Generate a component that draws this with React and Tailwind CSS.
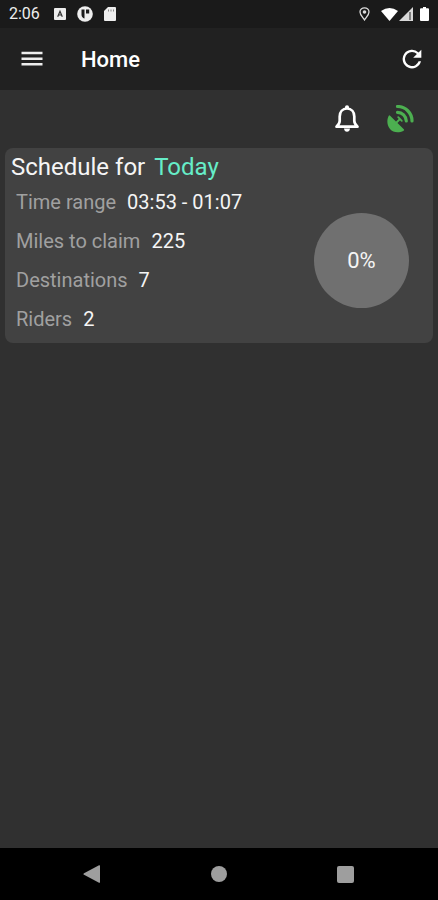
import React from 'react';

const details = [
  { label: 'Time range', value: '03:53 - 01:07' },
  { label: 'Miles to claim', value: '225' },
  { label: 'Destinations', value: '7' },
  { label: 'Riders', value: '2' },
];

function StatusBar() {
  return (
    <div className="flex h-7 items-center justify-between bg-[#1a1a1a] px-[9px] text-[#eeeeee]">
      <div className="flex items-center">
        <span className="w-[45px] text-base leading-5">2:06</span>
        <svg className="h-[12px] w-[12px]" viewBox="0 0 12 12" aria-hidden="true">
          <rect width="12" height="12" rx="1" fill="#eeeeee" />
          <path d="M3.700 8.700L6 3.200L8.300 8.700M4.500 7h3" stroke="#333333" strokeWidth="1.200" fill="none" />
        </svg>
        <svg className="ml-[11px] h-4 w-4" viewBox="0 0 16 16" aria-hidden="true">
          <circle cx="8" cy="8" r="7.800" fill="#eeeeee" />
          <path d="M4.500 3.500h3v9q-3-1-3-4zM9 3.500h3.200v4H9z" fill="#1a1a1a" />
        </svg>
        <svg className="ml-[11px] h-[14px] w-3" viewBox="0 0 12 14" aria-hidden="true">
          <path d="M4 0h7q1 0 1 1v12q0 1-1 1H1q-1 0-1-1V4z" fill="#eeeeee" />
          <path d="M4.500 2.500v2M7 2.500v2M9.500 2.500v2" stroke="#888888" />
        </svg>
      </div>
      <div className="flex items-center">
        <svg className="mr-[11px] h-[14px] w-[11px]" viewBox="0 0 11 14" aria-hidden="true">
          <path d="M5.500 13C3.500 10 1 7.800 1 5a4.500 4.200 0 0 1 9 0C10 7.800 7.500 10 5.500 13z" fill="none" stroke="#dddddd" strokeWidth="1.300" />
          <circle cx="5.500" cy="5" r="1.800" fill="#dddddd" />
        </svg>
        <svg className="h-[13px] w-[17px]" viewBox="0 0 17 13" aria-hidden="true">
          <path d="M0 3Q8.500-3 17 3L8.500 13z" fill="#ffffff" />
        </svg>
        <svg className="ml-px h-[14px] w-[14px]" viewBox="0 0 14 14" aria-hidden="true">
          <path d="M14 0v14H0z" fill="#d8d8d8" />
          <path d="M11 5v8" stroke="#444444" strokeWidth="1.200" />
        </svg>
        <svg className="ml-[7px] h-[14px] w-[9px]" viewBox="0 0 9 14" aria-hidden="true">
          <path d="M3 0h3v1.300h2q1 0 1 1V13q0 1-1 1H1q-1 0-1-1V2.300q0-1 1-1h2z" fill="#ffffff" />
        </svg>
      </div>
    </div>
  );
}

function AppBar() {
  return (
    <header className="flex h-[62px] items-center bg-[#212121] pl-[18px] pr-3 text-white">
      <button type="button" aria-label="Open menu" className="text-[#eeeeee]">
        <svg className="h-7 w-7" viewBox="0 0 28 28" stroke="currentColor" strokeWidth="2.500" aria-hidden="true">
          <path d="M3.500 8h21M3.500 13.700h21M3.500 19.300h21" />
        </svg>
      </button>
      <h1 className="ml-[35px] mt-px flex-1 text-[22px] font-medium leading-7">Home</h1>
      <button type="button" aria-label="Refresh">
        <svg className="h-7 w-7" viewBox="0 0 24 24" fill="currentColor" aria-hidden="true">
          <path d="M17.650 6.350A8 8 0 1 0 19.730 14h-2.080A6 6 0 1 1 12 6c1.660 0 3.140.690 4.220 1.780L13 11h7V4z" />
        </svg>
      </button>
    </header>
  );
}

function BellIcon() {
  return (
    <svg className="h-7 w-7" viewBox="0 0 28 28" fill="none" aria-hidden="true">
      <path
        d="M14 3.500c-4.500 0-7.300 3.500-7.300 8v4.500c0 2-1 3.500-3.200 5.700h21c-2.200-2.200-3.200-3.700-3.200-5.700v-4.500c0-4.500-2.800-8-7.300-8z"
        stroke="currentColor"
        strokeWidth="2.700"
        strokeLinejoin="round"
      />
      <path d="M12 3.500V2q0-1.700 2-1.700T16 2v1.500zM11 23.500h6q-.500 3.300-3 3.300T11 23.500z" fill="currentColor" />
    </svg>
  );
}

function DishIcon() {
  return (
    <svg className="h-7 w-7" viewBox="0 0 28 28" fill="none" stroke="currentColor" aria-hidden="true">
      <path d="M10.500 1.500A14.500 14.500 0 0 1 25 16" strokeWidth="3.200" strokeLinecap="round" />
      <path d="M10.500 7.300A9 9 0 0 1 19.300 16" strokeWidth="3.200" strokeLinecap="round" />
      <path d="M1.800 10.800q.500-.900 1.300-.100L16.800 24.300q.800.900-.200 1.400C11.500 28.300 6 27.500 3 24S-.500 15 1.800 10.800z" fill="currentColor" stroke="none" />
      <path d="M9 18L13 14M11.200 12.200L14.800 15.800" strokeWidth="1.800" strokeLinecap="round" />
    </svg>
  );
}

function ScheduleCard() {
  return (
    <section className="mx-[5px] rounded-lg bg-[#424242] px-[6px] pb-[5px] pt-1">
      <h2 className="text-2xl leading-[30px] text-[#f5f5f5]">
        Schedule for <span className="ml-[3px] text-[#66edc8]">Today</span>
      </h2>
      <div className="flex items-center justify-between pl-[5px] pr-[18px]">
        <dl className="text-xl">
          {details.map(({ label, value }) => (
            <div key={label} className="flex h-[39px] items-center gap-[11px]">
              <dt className="text-[#a0a0a0]">{label}</dt>
              <dd className="text-[#f5f5f5]">{value}</dd>
            </div>
          ))}
        </dl>
        <div className="flex h-[95px] w-[95px] items-center justify-center rounded-full bg-[#707070] text-[22px] text-[#f5f5f5]">
          0%
        </div>
      </div>
    </section>
  );
}

export default function App() {
  return (
    <div className="flex min-h-screen flex-col bg-[#303030] font-['Roboto',sans-serif]">
      <StatusBar />
      <AppBar />
      <main className="flex-1">
        <div className="flex h-[58px] items-center justify-end gap-[26px] pr-[23px]">
          <button type="button" aria-label="Notifications" className="text-white">
            <BellIcon />
          </button>
          <button type="button" aria-label="GPS signal" className="text-[#4caf50]">
            <DishIcon />
          </button>
        </div>
        <ScheduleCard />
      </main>
      <nav aria-label="System navigation" className="flex h-[52px] items-center justify-between bg-black pl-[83px] pr-[84px] text-[#9e9e9e]">
        <button type="button" aria-label="Back">
          <svg className="h-[18px] w-[18px]" viewBox="0 0 18 18" fill="currentColor" aria-hidden="true">
            <path d="M1 8.200L16 .300q1-.500 1 .700v16q0 1.200-1 .700L1 9.800q-1.200-.800 0-1.600z" />
          </svg>
        </button>
        <button type="button" aria-label="Home screen" className="h-4 w-4 rounded-full bg-[#9e9e9e]" />
        <button type="button" aria-label="Recent apps" className="h-[17px] w-[17px] rounded-xs bg-[#9e9e9e]" />
      </nav>
    </div>
  );
}
